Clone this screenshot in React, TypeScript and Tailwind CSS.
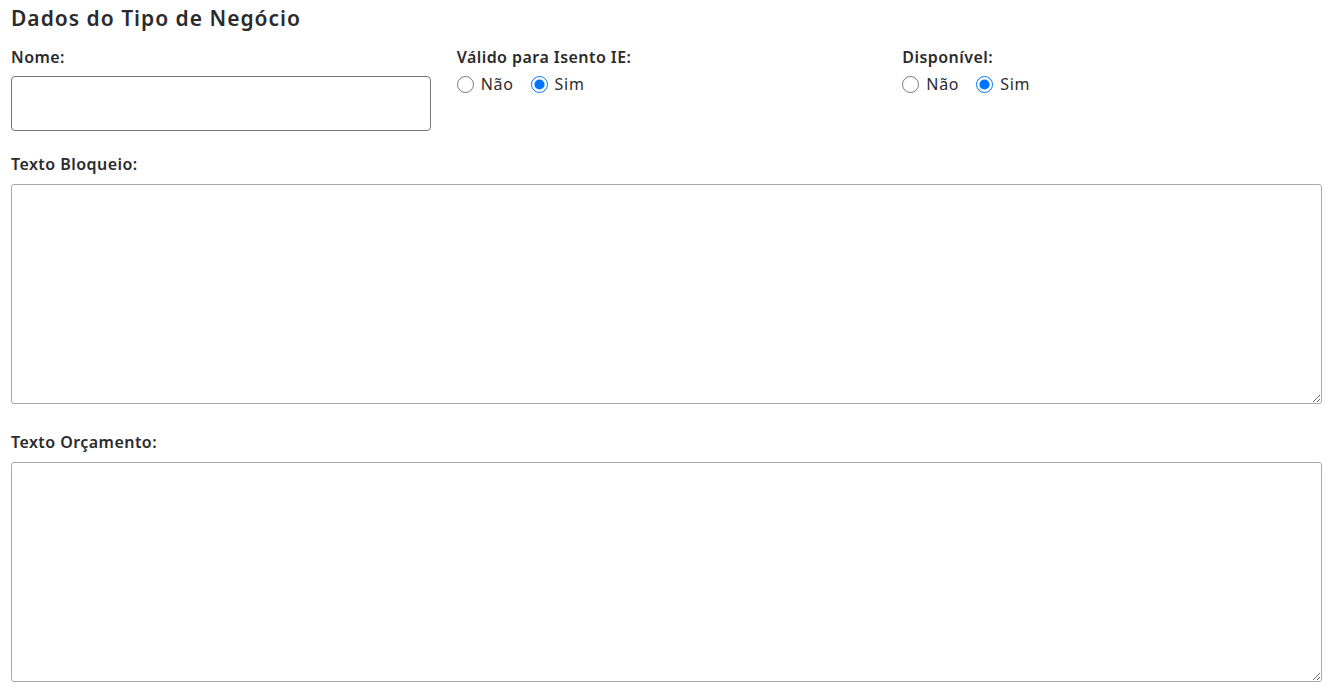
import React, { useState } from 'react';

/**
 * Formulário: Dados do Tipo de Negócio
 */
const font = { fontFamily: '"Noto Sans", "Liberation Sans", sans-serif' };

type RadioGroupProps = {
  name: string;
  value: string;
  onChange: (v: string) => void;
};

const RadioGroup: React.FC<RadioGroupProps> = ({ name, value, onChange }) => (
  <div className="flex items-center h-[24px] mt-[4px] text-[16px] tracking-[0.7px] text-[#2b2b2b]">
    {['Não', 'Sim'].map((opt) => (
      <label key={opt} className="flex items-center mr-[17px] cursor-pointer">
        <input
          type="radio"
          name={name}
          checked={value === opt}
          onChange={() => onChange(opt)}
          className="w-[17px] h-[17px] m-0 mr-[7px] accent-[#0075ff]"
        />
        {opt}
      </label>
    ))}
  </div>
);

const App: React.FC = () => {
  const [isento, setIsento] = useState('Sim');
  const [disponivel, setDisponivel] = useState('Sim');

  const labelCls = 'block text-[16px] leading-[22px] font-semibold tracking-[0.45px]';

  return (
    <div className="w-[1340px] h-[698px] bg-white pl-[11px] pr-[18px] pt-[3px] text-[#2b2b2b]" style={font}>
      {/* título */}
      <h2 className="text-[21px] leading-[30px] font-semibold tracking-[1px]">Dados do Tipo de Negócio</h2>

      {/* primeira linha */}
      <div className="grid grid-cols-3 gap-x-[26px] mt-[13px]">
        <div>
          <label className={labelCls}>Nome:</label>
          <input
            type="text"
            className="block w-full h-[55px] mt-[8px] border border-[#767676] rounded-[4px] px-2 outline-none"
          />
        </div>
        <div>
          <label className={labelCls}>Válido para Isento IE:</label>
          <RadioGroup name="isento" value={isento} onChange={setIsento} />
        </div>
        <div>
          <label className={labelCls}>Disponível:</label>
          <RadioGroup name="disponivel" value={disponivel} onChange={setDisponivel} />
        </div>
      </div>

      {/* texto bloqueio */}
      <label className={`${labelCls} mt-[22px]`}>Texto Bloqueio:</label>
      <textarea className="block w-full h-[220px] mt-[9px] border border-[#a9a9a9] rounded-[3px] p-2 outline-none" />

      {/* texto orçamento */}
      <label className={`${labelCls} mt-[27px]`}>Texto Orçamento:</label>
      <textarea className="block w-full h-[220px] mt-[9px] border border-[#a9a9a9] rounded-[3px] p-2 outline-none" />
    </div>
  );
};

export default App;
